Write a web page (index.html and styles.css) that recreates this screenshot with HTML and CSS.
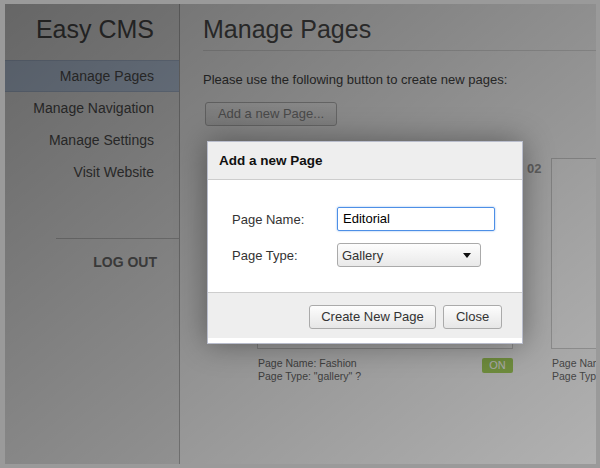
FILE: index.html
```html
<!DOCTYPE html>
<html>
<head>
<meta charset="utf-8">
<link rel="stylesheet" href="styles.css">
</head>
<body>
<div class="app">
  <aside class="sidebar">
    <div class="brand">Easy CMS</div>
    <nav class="nav">
      <a class="nav-item active">Manage Pages</a>
      <a class="nav-item">Manage Navigation</a>
      <a class="nav-item">Manage Settings</a>
      <a class="nav-item">Visit Website</a>
    </nav>
    <div class="divider"></div>
    <a class="logout">LOG OUT</a>
  </aside>
  <main class="main">
    <h1 class="title">Manage Pages</h1>
    <p class="intro">Please use the following button to create new pages:</p>
    <div class="btn add-btn">Add a new Page...</div>
    <div class="cards">
      <div class="card-item">
        <div class="card-num">01</div>
        <div class="card-col">
          <div class="card"></div>
          <div class="card-info">
            <div class="card-text">Page Name: Fashion<br>Page Type: "gallery" ?</div>
            <span class="badge">ON</span>
          </div>
        </div>
      </div>
      <div class="card-item">
        <div class="card-num">02</div>
        <div class="card-col">
          <div class="card"></div>
          <div class="card-info">
            <div class="card-text">Page Name: Editorial<br>Page Type: "gallery" ?</div>
            <span class="badge">ON</span>
          </div>
        </div>
      </div>
    </div>
  </main>
  <div class="overlay"></div>
  <div class="modal">
    <div class="modal-head">Add a new Page</div>
    <div class="modal-body">
      <div class="form-row">
        <label class="form-label">Page Name:</label>
        <div class="input">Editorial</div>
      </div>
      <div class="form-row">
        <label class="form-label">Page Type:</label>
        <div class="select"><span>Gallery</span><span class="caret"></span></div>
      </div>
    </div>
    <div class="modal-foot">
      <div class="btn btn-create">Create New Page</div>
      <div class="btn btn-close">Close</div>
    </div>
  </div>
</div>
</body>
</html>
```
FILE: styles.css
```css
* { box-sizing: border-box; }
html, body { margin: 0; }
body {
  background: #9a9a9a;
  padding: 4px 4px 4px 5px;
  font-family: "Liberation Sans", Arial, sans-serif;
}
.app {
  position: relative;
  width: 591px;
  height: 460px;
  display: flex;
  overflow: hidden;
  background: #fff;
}
.sidebar {
  width: 175px;
  flex: none;
  background: #ececec;
  border-right: 1px solid #b5b5b5;
  display: flex;
  flex-direction: column;
}
.brand {
  height: 56px;
  padding: 11px 25px 0 0;
  text-align: right;
  font-size: 25px;
  line-height: 29px;
  color: #4a4a4a;
}
.nav { display: flex; flex-direction: column; }
.nav-item {
  height: 32px;
  line-height: 32px;
  padding-right: 25px;
  text-align: right;
  font-size: 14px;
  color: #4f4f4f;
}
.nav-item.active {
  background: #c2d3ea;
  border-top: 1px solid #aebfd8;
  border-bottom: 1px solid #aebfd8;
  line-height: 30px;
}
.divider {
  margin: 50px 0 0 51px;
  border-top: 1px solid #bdbdbd;
}
.logout {
  margin-top: 13px;
  padding-right: 22px;
  text-align: right;
  font-size: 14px;
  font-weight: bold;
  line-height: 20px;
  color: #6a6a6a;
}
.main {
  flex: 1;
  min-width: 0;
  padding-left: 23px;
  background: #fafafa;
}
.title {
  margin: 0;
  padding: 11px 0 6px;
  font-size: 25px;
  line-height: 29px;
  font-weight: normal;
  color: #4f4f4f;
  border-bottom: 1px solid #dcdcdc;
}
.intro {
  margin: 21px 0 0;
  font-size: 13px;
  line-height: 16px;
  color: #444;
}
.btn {
  display: inline-block;
  height: 24px;
  line-height: 22px;
  padding: 0;
  text-align: center;
  font-size: 13px;
  color: #333;
  border: 1px solid #aaa;
  border-radius: 3px;
  background: linear-gradient(#fdfdfd, #e6e6e6);
  white-space: nowrap;
}
.add-btn {
  margin: 14px 0 0 2px;
  width: 132px;
  color: #8a8a8a;
  border-color: #b8b8b8;
}
.cards {
  display: flex;
  gap: 14px;
  margin: 32px 0 0 30px;
}
.card-item { display: flex; flex: none; }
.card-num {
  width: 24px;
  padding-top: 3px;
  font-size: 13px;
  font-weight: bold;
  line-height: 16px;
  color: #9a9a9a;
}
.card-col { width: 256px; }
.card {
  height: 191px;
  background: #fff;
  border: 1px solid #cfcfcf;
}
.card-info {
  display: flex;
  justify-content: space-between;
  align-items: flex-start;
  margin-top: 2px;
  padding-left: 1px;
}
.card-text {
  padding-top: 6px;
  font-size: 10.5px;
  line-height: 13px;
  color: #666;
}
.badge {
  margin-top: 7px;
  width: 31px;
  height: 15px;
  line-height: 15px;
  text-align: center;
  font-size: 11px;
  color: #fff;
  background: #a6d25c;
  border-radius: 2px;
}
.overlay {
  position: absolute;
  inset: 0;
  background: linear-gradient(to bottom right, rgba(0,0,0,.57), rgba(0,0,0,.29));
}
.modal {
  position: absolute;
  left: 202px;
  top: 137px;
  width: 316px;
  background: #fff;
  border: 1px solid #b9bdcc;
  padding-bottom: 5px;
  box-shadow: 0 0 28px rgba(0,0,0,.38);
}
.modal-head {
  height: 38px;
  padding-left: 11px;
  display: flex;
  align-items: center;
  background: #eee;
  border-bottom: 1px solid #cdcdcd;
  font-size: 13.5px;
  font-weight: bold;
  color: #111;
}
.modal-body {
  padding: 27px 0 25px 24px;
  display: flex;
  flex-direction: column;
  gap: 12px;
}
.form-row {
  display: flex;
  align-items: center;
  height: 24px;
}
.form-label {
  width: 105px;
  font-size: 13px;
  color: #333;
}
.input {
  width: 158px;
  height: 24px;
  line-height: 22px;
  padding-left: 5px;
  font-size: 13px;
  color: #000;
  border: 1px solid #4d8fe6;
  border-radius: 2px;
  box-shadow: 0 0 2px rgba(77,143,230,.7);
}
.select {
  width: 144px;
  height: 24px;
  padding: 0 9px 0 4px;
  display: flex;
  align-items: center;
  justify-content: space-between;
  font-size: 13px;
  color: #333;
  border: 1px solid #aaa;
  border-radius: 3px;
  background: linear-gradient(#fdfdfd, #e9e9e9);
}
.caret {
  width: 0;
  height: 0;
  border-left: 4.5px solid transparent;
  border-right: 4.5px solid transparent;
  border-top: 5px solid #111;
}
.modal-foot {
  height: 46px;
  padding: 12px 20px 0 0;
  display: flex;
  justify-content: flex-end;
  gap: 7px;
  background: #eee;
  border-top: 1px solid #cdcdcd;
}
.btn-create { width: 127px; }
.btn-close { width: 59px; }
```
